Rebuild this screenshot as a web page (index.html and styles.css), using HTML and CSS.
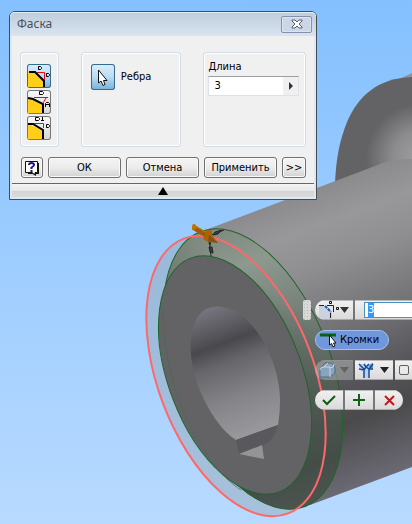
FILE: index.html
```html
<!DOCTYPE html>
<html lang="ru">
<head>
<meta charset="utf-8">
<title>Фаска</title>
<link rel="stylesheet" href="styles.css">
</head>
<body>
<main class="viewport">
<svg class="model" viewBox="0 0 412 524" preserveAspectRatio="xMinYMin slice" aria-hidden="true">
  <defs>
    <linearGradient id="shaft" gradientUnits="userSpaceOnUse" x1="208" y1="228" x2="310" y2="505">
      <stop offset="0" stop-color="#8b8b8d"/><stop offset=".12" stop-color="#98989a"/><stop offset=".25" stop-color="#8f8f92"/>
      <stop offset=".47" stop-color="#727275"/><stop offset=".66" stop-color="#55555a"/><stop offset=".78" stop-color="#4a4a4c"/><stop offset="1" stop-color="#6b6a74"/>
    </linearGradient>
    <linearGradient id="chamfer" gradientUnits="userSpaceOnUse" x1="225" y1="228" x2="325" y2="505">
      <stop offset="0" stop-color="#7f8b80"/><stop offset=".14" stop-color="#8d998f"/><stop offset=".4" stop-color="#6f7b73"/>
      <stop offset=".65" stop-color="#59635c"/><stop offset=".86" stop-color="#424843"/><stop offset="1" stop-color="#566058"/>
    </linearGradient>
    <linearGradient id="shade" gradientUnits="userSpaceOnUse" x1="160" y1="310" x2="205" y2="245">
      <stop offset="0" stop-color="#46504a" stop-opacity=".6"/><stop offset="1" stop-color="#46504a" stop-opacity="0"/>
    </linearGradient>
    <linearGradient id="bore" gradientUnits="userSpaceOnUse" x1="212" y1="307" x2="259" y2="434">
      <stop offset="0" stop-color="#77767f"/><stop offset=".28" stop-color="#49494d"/><stop offset=".42" stop-color="#66666a"/>
      <stop offset=".7" stop-color="#858589"/><stop offset="1" stop-color="#9a999d"/>
    </linearGradient>
    <radialGradient id="blend" gradientUnits="userSpaceOnUse" cx="420" cy="158" r="54">
      <stop offset="0" stop-color="#a0a0a4"/><stop offset=".5" stop-color="#8c8c8f"/><stop offset="1" stop-color="#636365"/>
    </radialGradient>
    <clipPath id="rim"><ellipse cx="253" cy="369" rx="147" ry="78" transform="rotate(69.2 253 369)"/></clipPath>
  </defs>
  <path d="M395 81L412 73V82Z" fill="#929294"/>
  <path d="M335 184C336 160 339 142 347 122C358 96 378 78 412 77V200H335Z" fill="url(#blend)"/>
  <path d="M208 229L383 163Q398 159 412 159V467L310 505Z" fill="url(#shaft)"/>
  <ellipse cx="236" cy="376" rx="147" ry="78" transform="rotate(69.2 236 376)" fill="#97a7b8" fill-opacity=".5"/>
  <g clip-path="url(#rim)">
    <rect x="155" y="220" width="200" height="300" fill="url(#chamfer)"/>
    <rect x="155" y="220" width="200" height="300" fill="url(#shade)"/>
  </g>
  <ellipse cx="253" cy="369" rx="147" ry="78" transform="rotate(69.2 253 369)" fill="none" stroke="#1f642b"/>
  <ellipse cx="235" cy="375" rx="125" ry="66.6" transform="rotate(69.2 235 375)" fill="#636365" stroke="#1f642b"/>
  <path d="M163 307C162 390 204 467 241 490" fill="none" stroke="#486a50" stroke-width=".7"/>
  <path d="M236 440C211 424 187 374 191 338C194 313 207 302 227 308C257 317 280 364 280 401Q280 413 278 425Z" fill="url(#bore)"/>
  <path d="M236 440L278 425Q275 440 262 446L239 454Z" fill="#58585d"/>
  <path d="M239 454L262 445L264 459Z" fill="#949498"/>
  <ellipse cx="236" cy="376" rx="147" ry="78" transform="rotate(69.2 236 376)" fill="none" stroke="#ff6868" stroke-width="2"/>
  <g stroke="#222725"><path d="M209 236L224 230M209 237L211 256" stroke-width="1"/><path d="M213 235L215 232L222 230L218 234ZM209 247L212 247L213 253L210 252ZM208 240L211 241L210 245Z" fill="#393e3c"/></g>
  <path d="M193 227L208 236" stroke="#9e5b00" stroke-width="5"/><path d="M195 226L209 234" stroke="#d07d08" stroke-width="1"/>
  <ellipse cx="194" cy="227" rx="2" ry="3" fill="#c87000"/>
  <path d="M207 229L212 231V235L218 243L208 242L203 239L205 236Z" fill="#ac6308"/><path d="M209 235L218 243L208 241Z" fill="#815015"/>
</svg>

<form class="dialog" aria-labelledby="dialog-title">
  <header class="titlebar">
    <h1 id="dialog-title">Фаска</h1>
    <button class="close" type="button" aria-label="Закрыть"><svg width="12" height="10" viewBox="0 0 12 10"><path d="M1 1H4L6 3L8 1H11V2L8 5L11 8V9H8L6 7L4 9H1V8L4 5L1 2Z" fill="#fff" stroke="#555e70"/></svg></button>
  </header>
  <div class="groups">
    <section class="group modes">
      <button class="tool selected" type="button" aria-label="Длина"><svg width="24" height="24" viewBox="0 0 24 24"><path d="M1 8H7L17 17V23H1Z" fill="#ffcf18"/><path d="M2 8H8L17 17V23" fill="none" stroke="#000" stroke-width="2"/><path d="M10 8.500H17.500V16" fill="none" stroke="#e20c17"/><path d="M11.500 2.500H13.500L14.500 3.500V4.500L13.500 5.500H11.500ZM19.500 9.500H21.500L22.500 10.500V11.500L21.500 12.500H19.500Z" fill="none" stroke="#000"/></svg></button>
      <button class="tool" type="button" aria-label="Длина и угол"><svg width="24" height="24" viewBox="0 0 24 24"><path d="M1 8L16 14V23H1Z" fill="#ffcf18"/><path d="M1 8L6 9L16 14V23" fill="none" stroke="#000" stroke-width="2"/><path d="M7 7.500H21M19 8L16 13" fill="none" stroke="#e20c17"/><path d="M12.500 1.500H15.500L16.500 2.500V3.500L15.500 4.500H12.500ZM18.500 17V13.500L19.500 12.500H21.500L22.500 13.500V17M19 14.500H22" fill="none" stroke="#000"/></svg></button>
      <button class="tool" type="button" aria-label="Две длины"><svg width="24" height="24" viewBox="0 0 24 24"><path d="M1 8L16 14V23H1Z" fill="#ffcf18"/><path d="M1 8L6 8L16 14V23" fill="none" stroke="#000" stroke-width="2"/><path d="M7 7.500H16.500V12" fill="none" stroke="#e20c17"/><path d="M8.500 1.500H11.500L12.500 2.500V3.500L11.500 4.500H8.500ZM15.500 1V5M14 4.500H17M19.500 8.500H21.500L22.500 9.500V10.500L21.500 11.500H19.500Z" fill="none" stroke="#000"/></svg></button>
    </section>
    <section class="group edges">
      <button class="tool selected pick" id="edges" type="button" aria-label="Ребра"><svg width="24" height="24" viewBox="0 0 24 24"><path d="M7.500 5V18L10 16L12 20.500L14 19.500L12.500 15.500H16Z" fill="#fff" stroke="#111"/></svg></button>
      <label for="edges">Ребра</label>
    </section>
    <section class="group length">
      <label for="length">Длина</label>
      <div class="field"><input id="length" type="text" value="3"><button type="button" aria-label="Параметры длины"><svg width="4" height="8" viewBox="0 0 4 8"><path d="M0 0L4 4L0 8Z" fill="#333"/></svg></button></div>
    </section>
  </div>
  <div class="actions">
    <button class="push help" type="button" aria-label="Справка"><svg width="16" height="16" viewBox="0 0 16 16"><path d="M4 3H15V14H12V16L9 14H4Z" fill="#111"/><path d="M1.500 1.500H13.500V12.500H11V15L8 12.500H1.500Z" fill="#fffff0" stroke="#111"/><path d="M5 5Q5 3 7.500 3Q10 3 10 5Q10 6 7.500 7.500V9" fill="none" stroke="#161694" stroke-width="2"/><path d="M6.500 10H8.500V12H6.500Z" fill="#161694"/></svg></button>
    <button class="push wide" type="button">ОК</button>
    <button class="push wide" type="button">Отмена</button>
    <button class="push wide" type="button">Применить</button>
    <button class="push more" type="button">&gt;&gt;</button>
  </div>
  <button class="collapse" type="button" aria-label="Свернуть"><svg width="10" height="8" viewBox="0 0 10 8"><path d="M5 0L10 8H0Z"/></svg></button>
</form>

<div class="mini" role="toolbar" aria-label="Фаска">
  <span class="grip"></span>
  <div class="strip long">
    <button class="cell drop" type="button" aria-label="Тип фаски"><svg width="32" height="20" viewBox="0 0 32 20"><path d="M1 6H9L14 12V19H1Z" fill="#cbd2db"/><path d="M1 5.500H6M12.500 13V18" stroke="#222" fill="none"/><path d="M7 6L13 12" stroke="#1b55b5" stroke-width="2" stroke-dasharray="3 1"/><path d="M9 5.500H15.500V12" stroke="#222" fill="none"/><path d="M11.500 1.500H13.500V3.500H11.500ZM18.500 7.500H20.500V9.500H18.500Z" fill="none" stroke="#111"/><path d="M22 7H31L26.500 13Z" fill="#333"/></svg></button>
    <div class="cell value"><input type="text" value="3" aria-label="Значение длины" id="mini-length"><span class="selection" aria-hidden="true">3</span></div>
  </div>
  <button class="pill" type="button"><svg width="18" height="16" viewBox="0 0 18 16"><path d="M0 3H16" stroke="#096313" stroke-width="3"/><path d="M9.500 3V13L11.500 11.500L13 15L15 14L13.500 11H16Z" fill="#fff" stroke="#111"/></svg>Кромки</button>
  <div class="strip long">
    <button class="cell drop disabled" type="button" disabled aria-label="Цепочка кромок"><svg width="32" height="20" viewBox="0 0 32 20"><path d="M2 9L7 3H13L17 7V13L12 17H2Z" fill="#89a4bc" stroke="#506e8c"/><path d="M2 10Q2 7 6 7H12V17M6 7L10 3M12 8Q16 8 16 4" fill="none" stroke="#c5d4df"/><path d="M22 7H31L26.500 13Z" fill="#606362"/></svg></button>
    <button class="cell drop" type="button" aria-label="Сопряжение"><svg width="32" height="20" viewBox="0 0 32 20"><path d="M1 4H6L9 7L13 3H15V8L11 11V18H5V11L1 9Z" fill="#bbd3ea"/><path d="M10 6L15 3V9Z" fill="#5c96cb"/><path d="M1 4L6 9V18M11 18V9L15 4M1 9L6 10L8 7L11 9L15 9M6 4L8 7L11 4" fill="none" stroke="#154b9b" stroke-width="1.500"/><path d="M22 7H31L26.500 13Z" fill="#222"/></svg></button>
    <span class="cell option"><input type="checkbox" aria-label="Просмотр"></span>
  </div>
  <div class="strip confirm">
    <button class="cell" type="button" aria-label="ОК"><svg width="14" height="12" viewBox="0 0 14 12"><path d="M1 6L5 10L13 2" fill="none" stroke="#0e5c0e" stroke-width="2"/></svg></button>
    <button class="cell" type="button" aria-label="Применить"><svg width="12" height="12" viewBox="0 0 12 12"><path d="M6 0V12M0 6H12" stroke="#116312" stroke-width="2"/></svg></button>
    <button class="cell" type="button" aria-label="Отмена"><svg width="11" height="11" viewBox="0 0 11 11"><path d="M1 1L10 10M10 1L1 10" stroke="#b91c20" stroke-width="2"/></svg></button>
  </div>
</div>
</main>
</body>
</html>
```
FILE: styles.css
```css
* { box-sizing: border-box; }
body { margin: 0; font: 11px/14px "DejaVu Sans Condensed", "DejaVu Sans", sans-serif; color: #000; }
button, input { margin: 0; padding: 0; border: 0; font: inherit; color: inherit; }
svg { display: block; }

.viewport { position: relative; min-height: 100vh; overflow: hidden; background: linear-gradient(#84c0ff, #b8daff); }
.model { position: absolute; inset: 0; width: 100%; height: 100%; }

/* Dialog window */
.dialog { position: absolute; top: 11px; left: 9px; width: 308px; border: 1px solid #484b50; border-radius: 6px 6px 0 0; background: #f0f0f0; box-shadow: inset 0 0 0 2px #dce8f4; padding: 0 2px 2px; }
.titlebar { display: flex; align-items: center; justify-content: space-between; height: 24px; margin: 0 -2px; padding: 0 4px; border-radius: 5px 5px 0 0; background: linear-gradient(#becddc, #d9e4f0); box-shadow: inset 0 1px #e4edf6; }
.titlebar h1 { margin: 0; padding-left: 3px; font: 12px/16px "Noto Sans", sans-serif; color: #4b5058; }
.close { display: grid; place-items: center; width: 31px; height: 17px; border: 1px solid #8490ac; border-radius: 2px; background: #cbd7e6; box-shadow: inset 0 0 0 1px #dbe4ef; }
.groups { display: grid; grid-template-columns: minmax(0, 39fr) minmax(0, 101fr) minmax(0, 103fr); gap: 22px; padding: 16px 8px 10px; }
.group { height: 95px; border: 1px solid #d0dce8; border-radius: 3px; box-shadow: inset 0 0 0 1px #fff; }
.modes { display: flex; flex-direction: column; align-items: center; gap: 2px; padding-top: 11px; }
.tool { flex: none; width: 24px; height: 24px; border-radius: 3px; background: linear-gradient(#fafafa, #d5d5d5); box-shadow: inset 0 0 0 1px #777; overflow: hidden; }
.tool.selected { background: linear-gradient(#ddeefa, #b9dcf2 50%, #75b1d8); box-shadow: inset 0 0 0 1px #376b91; }
.edges { display: flex; align-items: flex-start; gap: 6px; padding: 11px 9px; }
.edges .pick { height: 26px; }
.edges label { padding-top: 6px; }
.length { padding: 7px 6px 0 4px; }
.length label { display: block; }
.field { display: flex; height: 20px; margin-top: 2px; border: 1px solid #dde2e8; border-top-color: #9b9ea3; background: #fff; }
.field input { flex: 1; min-width: 0; padding-left: 5px; background: transparent; }
.field button { display: grid; place-items: center; width: 15px; background: #f0f0f0; }
.actions { display: flex; gap: 5px; padding: 0 8px 5px 9px; }
.push { display: grid; place-items: center; height: 21px; border: 1px solid #707070; border-radius: 3px; background: linear-gradient(#f4f4f4, #ececec 50%, #d2d2d2); box-shadow: inset 0 0 0 1px #fafafa; }
.push.wide { flex: 1; }
.push.help { width: 22px; }
.push.more { width: 24px; }
.collapse { display: grid; place-items: center; width: 100%; height: 14px; border-top: 1px solid #666; background: linear-gradient(#f4f4f4, #e8e8e8 50%, #d4d4d4 55%, #dadada); }

/* In-canvas mini toolbar */
.mini { position: absolute; top: 300px; left: 303px; display: grid; grid-template-columns: 8px max-content; grid-auto-rows: 20px; gap: 10px 4px; }
.mini > * { grid-column: 2; justify-self: start; }
.mini > .grip { grid-column: 1; width: 8px; height: 20px; border-radius: 2px; background: radial-gradient(circle, #bbb 1px, transparent 1px) 0 0 / 3px 3px, #d8d8d8; }
.strip { display: flex; gap: 2px; border-radius: 10px; overflow: hidden; background: #777; }
.strip.long { background: none; border-radius: 10px 0 0 10px; }
.cell { display: grid; place-items: center; height: 20px; background: linear-gradient(#f1f1f1, #d9d9d9); box-shadow: inset 0 1px #bbb, inset 0 -1px #aaa; }
.drop { width: 38px; }
.drop.disabled { background: rgb(190 194 194 / 45%); box-shadow: inset 0 1px #8e9490; }
.value { position: relative; width: 96px; padding-left: 9px; }
.value input { width: 100%; height: 16px; padding-left: 3px; border: 1px solid #4b91bd; background: #fff; }
.selection { position: absolute; top: 3px; left: 13px; line-height: 14px; background: #3399ff; color: #fff; }
.option { width: 60px; justify-items: start; padding-left: 4px; }
.option input { appearance: none; width: 10px; height: 10px; border: 1px solid #5f5f5f; border-radius: 2px; background: #e9e9e9; }
.pill { display: flex; align-items: center; gap: 2px; width: 74px; height: 20px; padding-left: 4px; border: 1px solid #a4c0ef; border-radius: 10px; background: #7096dc; }
.confirm { gap: 2px; }
.confirm .cell { width: 28px; }
```
